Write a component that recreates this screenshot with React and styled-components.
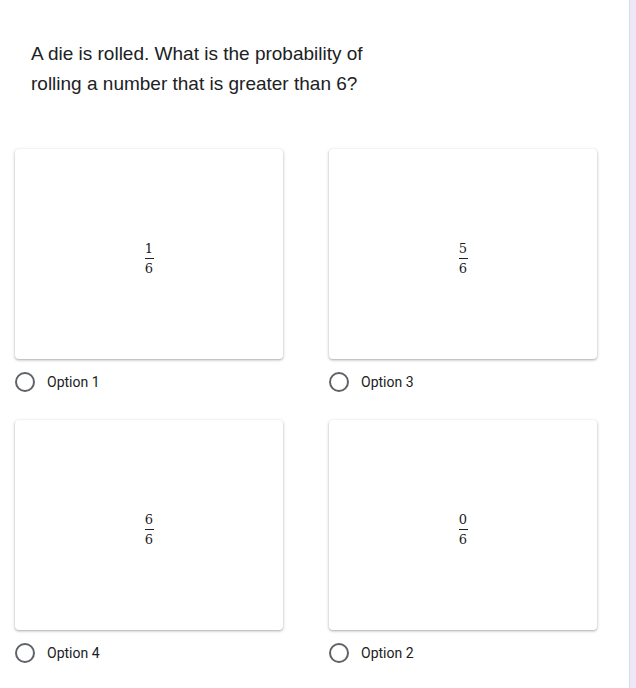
import React from 'react';
import styled, { createGlobalStyle } from 'styled-components';

const Global = createGlobalStyle`
  html, body {
    margin: 0;
    padding: 0;
    background: #ede7f6;
  }
  * { box-sizing: border-box; }
`;

const Panel = styled.div`
  width: 630px;
  min-height: 100vh;
  background: #ffffff;
  border-right: 1px solid #dadce0;
  padding: 39px 15px 0 15px;
`;

const Question = styled.div`
  padding-left: 16px;
  max-width: 370px;
  font-family: "Liberation Sans", Arial, sans-serif;
  font-size: 19px;
  line-height: 30px;
  color: #202124;
`;

const Grid = styled.div`
  margin-top: 50px;
  display: grid;
  grid-template-columns: 268px 268px;
  column-gap: 46px;
`;

const Choice = styled.div`
  display: flex;
  flex-direction: column;
`;

const Card = styled.div`
  width: 268px;
  height: 210px;
  background: #fff;
  border-radius: 4px;
  box-shadow: 0 1px 2px rgba(60, 64, 67, 0.3), 0 1px 3px 1px rgba(60, 64, 67, 0.12);
  display: flex;
  align-items: center;
  justify-content: center;
  padding-top: 9px;
`;

const Fraction = styled.span`
  display: inline-flex;
  flex-direction: column;
  align-items: center;
  font-family: "DejaVu Serif", "Liberation Serif", serif;
  font-size: 13px;
  line-height: 14px;
  color: #202124;
`;

const Bar = styled.span`
  display: block;
  width: 9px;
  height: 1px;
  background: #202124;
  margin: 2px 0 3px;
`;

const OptionRow = styled.label`
  display: flex;
  align-items: center;
  height: 24px;
  margin: 11px 0 26px;
  font-family: Roboto, "Noto Sans", sans-serif;
  font-size: 14px;
  color: #202124;
  cursor: pointer;
`;

const Radio = styled.span`
  width: 20px;
  height: 20px;
  margin-right: 12px;
  border: 2px solid #5f6368;
  border-radius: 50%;
  flex-shrink: 0;
`;

const options = [
  { num: 1, label: 'Option 1' },
  { num: 5, label: 'Option 3' },
  { num: 6, label: 'Option 4' },
  { num: 0, label: 'Option 2' },
];

export default function App() {
  return (
    <>
      <Global />
      <Panel>
        <Question>
          A die is rolled. What is the probability of rolling a number that is greater than 6?
        </Question>
        <Grid>
          {options.map((o) => (
            <Choice key={o.label}>
              <Card>
                <Fraction>
                  <span>{o.num}</span>
                  <Bar />
                  <span>6</span>
                </Fraction>
              </Card>
              <OptionRow>
                <Radio />
                {o.label}
              </OptionRow>
            </Choice>
          ))}
        </Grid>
      </Panel>
    </>
  );
}
